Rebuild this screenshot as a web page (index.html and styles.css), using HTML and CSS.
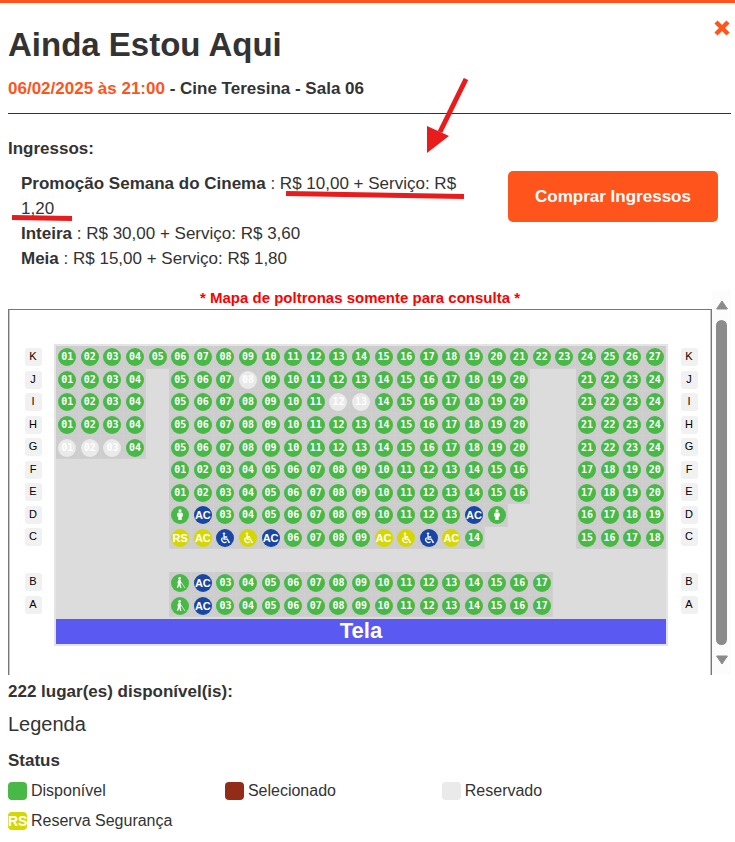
FILE: index.html
```html
<!DOCTYPE html>
<html lang="pt-BR">
<head>
  <meta charset="UTF-8" />
  <meta name="viewport" content="width=device-width, initial-scale=1.0" />
  <title>Ainda Estou Aqui</title>
  <link rel="stylesheet" href="styles.css">
</head>
<body>

  <!-- ICONES DAS POLTRONAS -->
  <svg class="sprite" aria-hidden="true">
    <symbol id="cadeirante" viewBox="0 0 12 12">
      <circle cx="5" cy="1.6" r="1.2" fill="currentColor" />
      <path d="M5 3v4.2h3.4L10 10.4l1-.4M5.2 5h3M3.6 5.6a2.8 2.8 0 1 0 4 4" fill="none" stroke="currentColor" stroke-width="1.3" />
    </symbol>
    <symbol id="pessoa" viewBox="0 0 12 12">
      <circle cx="6" cy="1.8" r="1.5" fill="currentColor" />
      <path d="M4.4 3.5h3.2l1.2 1v3H7.700V11H4.300V7.500H3.200v-3z" fill="currentColor" />
    </symbol>
    <symbol id="bengala" viewBox="0 0 12 12">
      <circle cx="5.600" cy="1.400" r="1.300" fill="currentColor" />
      <path d="M4.400 3h2.200l.6 2.500-.7 1.700 1 3.800H6.200L5.200 8.200 4 11H2.800l1.200-4-.6-1.500z" fill="currentColor" />
      <path d="M7 5l4 6" stroke="currentColor" stroke-width=".7" />
    </symbol>
  </svg>

  <main class="sessao">
    <button class="fechar" type="button" aria-label="Fechar">
      <svg viewBox="0 0 16 16"><path d="M2 2l12 12M14 2L2 14" stroke="currentColor" stroke-width="4.400" /></svg>
    </button>

    <h1>Ainda Estou Aqui</h1>
    <h2><span class="data">06/02/2025 às 21:00</span> - Cine Teresina - Sala 06</h2>

    <!-- INGRESSOS -->
    <section class="ingressos">
      <h3>Ingressos:</h3>
      <div class="compra">
        <ul class="precos">
          <li><b>Promoção Semana do Cinema</b> : R$ 10,00 + Serviço: R$ 1,20</li>
          <li><b>Inteira</b> : R$ 30,00 + Serviço: R$ 3,60</li>
          <li><b>Meia</b> : R$ 15,00 + Serviço: R$ 1,80</li>
        </ul>
        <button class="comprar" type="button">Comprar Ingressos</button>
      </div>
      <svg class="marcacao" viewBox="0 0 480 160" aria-hidden="true">
        <path d="M458 9L432 62" stroke="#e81c1c" stroke-width="5" />
        <path d="M419 56l22 10-22 17z" fill="#e81c1c" />
        <path d="M278 123.500L456 126.500M4 147.500l60 1" stroke="#e81c1c" stroke-width="5" />
      </svg>
    </section>

    <!-- MAPA -->
    <section class="rolagem">
      <div class="mapa">
        <p class="aviso">* Mapa de poltronas somente para consulta *</p>
        <div class="quadro">
          <div class="fileiras"></div>
          <div class="sala">
            <div class="poltronas"></div>
            <div class="tela">Tela</div>
          </div>
          <div class="fileiras"></div>
        </div>
      </div>
      <div class="barra" aria-hidden="true">
        <svg viewBox="0 0 12 10"><path d="M6 1l5.400 8H.6z" fill="#8b8b8b" stroke="#8b8b8b" stroke-linejoin="round" /></svg>
        <span class="polegar"></span>
        <svg viewBox="0 0 12 10"><path d="M6 9l5.400-8H.6z" fill="#8b8b8b" stroke="#8b8b8b" stroke-linejoin="round" /></svg>
      </div>
    </section>

    <h3 class="total">222 lugar(es) disponível(is):</h3>

    <!-- LEGENDA -->
    <section class="legenda">
      <h4>Legenda</h4>
      <h3>Status</h3>
      <ul class="status">
        <li><span class="cor disponivel"></span>Disponível</li>
        <li><span class="cor selecionado"></span>Selecionado</li>
        <li><span class="cor reservado"></span>Reservado</li>
        <li><span class="cor seguranca">RS</span>Reserva Segurança</li>
      </ul>
    </section>
  </main>

  <script src="script.js"></script>
</body>
</html>
```

FILE: styles.css
```css
* {
  box-sizing: border-box;
}

body {
  margin: 0;
  border-top: 3px solid #ff541c;
  background: #fff;
  color: #333;
  font-family: "Liberation Sans", Arial, sans-serif;
  font-size: 17px;
  line-height: 25px;
}

h1, h2, h3, h4, p, ul {
  margin: 0;
  padding: 0;
}

ul {
  list-style: none;
}

.sprite {
  position: absolute;
  width: 0;
  height: 0;
}

.sessao {
  position: relative;
  padding: 23px 4px 8px 8px;
}

.fechar {
  position: absolute;
  top: 17px;
  right: 5px;
  width: 16px;
  height: 16px;
  padding: 0;
  border: none;
  background: none;
  color: #ff541c;
  cursor: pointer;
}

.fechar svg {
  display: block;
}

h1 {
  font-size: 33px;
  line-height: 38px;
}

h2 {
  padding: 12px 0;
  border-bottom: 1px solid #333;
  font-size: 17px;
}

h3 {
  font-size: 17px;
}

.data {
  color: #ff541c;
}

/* ingressos */
.ingressos {
  position: relative;
  padding-top: 22px;
}

.compra {
  display: flex;
  align-items: flex-start;
  gap: 24px;
  padding: 10px 13px 0;
}

.precos {
  flex: 1;
}

.comprar {
  flex: none;
  width: 210px;
  height: 51px;
  border: none;
  border-radius: 5px;
  background: #ff541c;
  color: #fff;
  font-family: inherit;
  font-size: 17px;
  font-weight: bold;
  cursor: pointer;
}

.marcacao {
  position: absolute;
  top: -44px;
  left: 0;
  width: 480px;
  height: 160px;
  pointer-events: none;
}

/* mapa de poltronas */
.rolagem {
  display: flex;
  margin-top: 19px;
}

.mapa {
  flex: 1;
}

.aviso {
  padding-bottom: 4px;
  color: #f00;
  font-size: 15px;
  font-weight: bold;
  line-height: 15px;
  text-align: center;
}

.quadro {
  display: flex;
  padding: 34px 10px 29px 12px;
  border: 1px solid #777;
  border-bottom: none;
  box-shadow: inset 1px 0 #c8c8c8, inset -1px 0 #c8c8c8;
}

.fileiras {
  display: grid;
  grid-template-rows: repeat(12, 1fr);
  align-items: center;
  justify-items: center;
  width: 24px;
  padding: 2px 0 30px;
}

.fileiras span {
  width: 17px;
  height: 18px;
  border-radius: 3px;
  background: #f1f1f1;
  color: #000;
  font-size: 11px;
  line-height: 17px;
  text-align: center;
}

.sala {
  flex: 1;
  margin: 0 9px;
  border: 2px solid #e4e4e4;
  background: #dcdcdc;
}

.poltronas {
  display: grid;
  grid-template-columns: repeat(27, 1fr);
}

.lugar {
  display: flex;
  align-items: center;
  justify-content: center;
  aspect-ratio: 1;
  min-width: 0;
}

.ocupa {
  background: #cdcdcd;
  box-shadow: inset -1px -1px #d0d0d0;
}

.poltrona {
  display: flex;
  align-items: center;
  justify-content: center;
  flex: none;
  width: 18px;
  height: 18px;
  border-radius: 50%;
  background: #48b946;
  color: #fff;
  font-family: "DejaVu Sans Mono", monospace;
  font-size: 10px;
  font-weight: bold;
  line-height: 18px;
}

.poltrona svg {
  width: 12px;
  height: 12px;
}

.sigla {
  font-family: "Liberation Sans", Arial, sans-serif;
  font-size: 11px;
}

.poltrona.azul {
  background: #1746a5;
}

.poltrona.amarela {
  background: #d5d800;
}

.poltrona.ocupada {
  background: #eaeaea;
}

.tela {
  margin-top: 2px;
  background: #5a5af2;
  color: #fff;
  font-size: 22px;
  font-weight: bold;
  line-height: 24px;
  padding-bottom: 1px;
  text-align: center;
}

.barra {
  display: flex;
  flex-direction: column;
  align-items: center;
  gap: 10px;
  width: 19px;
  padding: 10px 0;
  background: #fcfcfc;
}

.barra svg {
  width: 12px;
  height: 10px;
}

.polegar {
  flex: 1;
  width: 11px;
  border-radius: 6px;
  background: #8b8b8b;
}

.total {
  padding-top: 4px;
}

/* legenda */
.legenda h4 {
  padding: 8px 0 11px;
  font-size: 20px;
  font-weight: normal;
}

.status {
  display: grid;
  grid-template-columns: repeat(3, 30%);
  row-gap: 5px;
  padding-top: 5px;
  font-size: 16px;
}

.status li {
  display: flex;
  align-items: center;
  gap: 4px;
}

.cor {
  width: 19px;
  height: 18px;
  border-radius: 4px;
  color: #fff;
  font-size: 14px;
  font-weight: bold;
  line-height: 18px;
  text-align: center;
}

.disponivel {
  background: #48b946;
}

.selecionado {
  background: #922c18;
}

.reservado {
  background: #eaeaea;
}

.seguranca {
  background: #d5d800;
}
```

FILE: script.js
```js
// . = vazio, r = reservado, a = azul, y = amarelo
const fileiras = {
  K: '01 02 03 04 05 06 07 08 09 10 11 12 13 14 15 16 17 18 19 20 21 22 23 24 25 26 27',
  J: '01 02 03 04 . 05 06 07 r08 09 10 11 12 13 14 15 16 17 18 19 20 . . 21 22 23 24',
  I: '01 02 03 04 . 05 06 07 08 09 10 11 r12 r13 14 15 16 17 18 19 20 . . 21 22 23 24',
  H: '01 02 03 04 . 05 06 07 08 09 10 11 12 13 14 15 16 17 18 19 20 . . 21 22 23 24',
  G: 'r01 r02 r03 04 . 05 06 07 08 09 10 11 12 13 14 15 16 17 18 19 20 . . 21 22 23 24',
  F: '. . . . . 01 02 03 04 05 06 07 08 09 10 11 12 13 14 15 16 . . 17 18 19 20',
  E: '. . . . . 01 02 03 04 05 06 07 08 09 10 11 12 13 14 15 16 . . 17 18 19 20',
  D: '. . . . . #pessoa aAC 03 04 05 06 07 08 09 10 11 12 13 aAC #pessoa . . . 16 17 18 19',
  C: '. . . . . yRS yAC a#cadeirante y#cadeirante aAC 06 07 08 09 yAC y#cadeirante a#cadeirante yAC 14 . . . . 15 16 17 18',
  '': '. . . . . . . . . . . . . . . . . . . . . . . . . . .',
  B: '. . . . . #bengala aAC 03 04 05 06 07 08 09 10 11 12 13 14 15 16 17 . . . . .',
  A: '. . . . . #bengala aAC 03 04 05 06 07 08 09 10 11 12 13 14 15 16 17 . . . . .'
};

const cores = { r: 'ocupada', a: 'azul', y: 'amarela' };

function criarLugar(codigo) {
  if (codigo === '.') return '<div class="lugar"></div>';

  const cor = cores[codigo[0]] || '';
  const nome = cor ? codigo.slice(1) : codigo;
  const sigla = /^[A-Z]/.test(nome) ? 'sigla' : '';
  const conteudo = nome[0] === '#' ? `<svg><use href="${nome}" /></svg>` : nome;
  return `<div class="lugar ocupa"><span class="poltrona ${cor} ${sigla}">${conteudo}</span></div>`;
}

document.querySelector('.poltronas').innerHTML =
  Object.values(fileiras).map(f => f.split(' ').map(criarLugar).join('')).join('');

// letras dos dois lados da sala
document.querySelectorAll('.fileiras').forEach(lado => {
  lado.innerHTML = Object.keys(fileiras).map(l => l ? `<span>${l}</span>` : '<i></i>').join('');
});
```
